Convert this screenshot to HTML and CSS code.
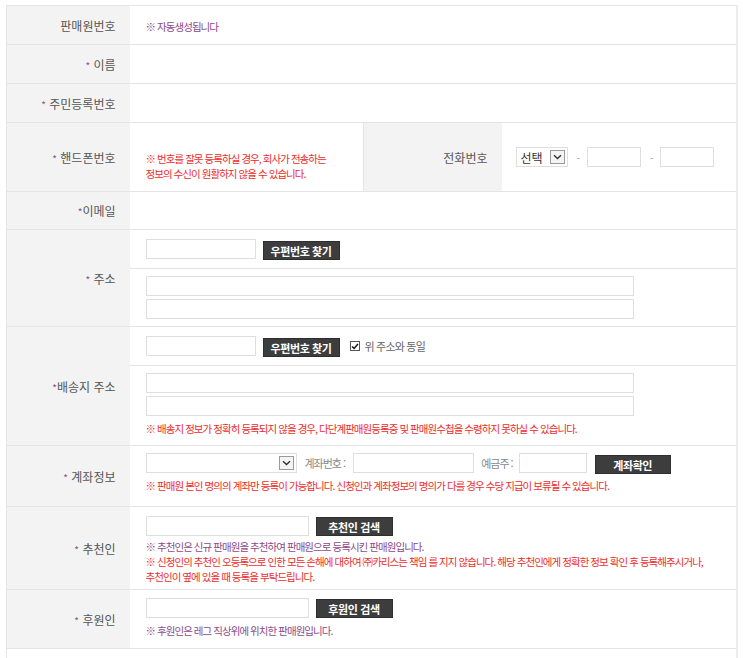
FILE: index.html
```html
<!DOCTYPE html>
<html lang="ko">
<head>
    <meta charset="UTF-8">
    <meta name="viewport" content="width=device-width, initial-scale=1.0">
    <title>판매원 등록</title>
    <link rel="stylesheet" href="styles.css">
</head>
<body>
    <div class="wrap">
        <table class="form-table">
            <colgroup>
                <col class="c-label">
                <col class="c-value">
                <col class="c-label2">
                <col class="c-value2">
            </colgroup>
            <tr class="row-sm">
                <th>판매원번호</th>
                <td colspan="3"><span class="note purple">※ 자동생성됩니다</span></td>
            </tr>
            <tr class="row-sm">
                <th><span class="req">*</span> 이름</th>
                <td colspan="3"></td>
            </tr>
            <tr class="row-sm">
                <th><span class="req">*</span> 주민등록번호</th>
                <td colspan="3"></td>
            </tr>
            <tr class="row-phone">
                <th><span class="req">*</span> 핸드폰번호</th>
                <td class="phone-note">
                    <p class="note red">※ 번호를 잘못 등록하실 경우, 회사가 전송하는<br>정보의 수신이 원활하지 않을 수 있습니다.</p>
                </td>
                <th>전화번호</th>
                <td>
                    <div class="line">
                        <span class="sel sel-tel">선택<span class="sel-arrow"><svg width="9" height="6" viewBox="0 0 9 6"><path d="M1 1.2 L4.5 4.6 L8 1.2" fill="none" stroke="#333" stroke-width="1.4"/></svg></span></span>
                        <span class="dash">-</span>
                        <input type="text" class="inp inp-tel">
                        <span class="dash">-</span>
                        <input type="text" class="inp inp-tel">
                    </div>
                </td>
            </tr>
            <tr class="row-email">
                <th><span class="req">*</span>이메일</th>
                <td colspan="3"></td>
            </tr>

            <tr class="row-sub">
                <th rowspan="2"><span class="req">*</span> 주소</th>
                <td colspan="3">
                    <div class="line">
                        <input type="text" class="inp inp-zip">
                        <button class="btn btn-zip">우편번호 찾기</button>
                    </div>
                </td>
            </tr>
            <tr>
                <td colspan="3" class="addr-cell">
                    <input type="text" class="inp inp-addr">
                    <input type="text" class="inp inp-addr">
                </td>
            </tr>

            <tr class="row-sub">
                <th rowspan="2"><span class="req">*</span>배송지 주소</th>
                <td colspan="3">
                    <div class="line">
                        <input type="text" class="inp inp-zip">
                        <button class="btn btn-zip">우편번호 찾기</button>
                        <label class="chk"><span class="chk-box"><svg width="9" height="9" viewBox="0 0 9 9"><path d="M1.2 4.4 L3.5 6.8 L7.8 1.6" fill="none" stroke="#111" stroke-width="1.6"/></svg></span>위 주소와 동일</label>
                    </div>
                </td>
            </tr>
            <tr>
                <td colspan="3" class="addr-cell ship-cell">
                    <input type="text" class="inp inp-addr">
                    <input type="text" class="inp inp-addr">
                    <p class="note red">※ 배송지 정보가 정확히 등록되지 않을 경우, 다단계판매원등록증 및 판매원수첩을 수령하지 못하실 수 있습니다.</p>
                </td>
            </tr>

            <tr class="row-bank">
                <th><span class="req">*</span> 계좌정보</th>
                <td colspan="3" class="bank-cell">
                    <div class="line">
                        <span class="sel sel-bank"><span class="sel-arrow"><svg width="9" height="6" viewBox="0 0 9 6"><path d="M1 1.2 L4.5 4.6 L8 1.2" fill="none" stroke="#333" stroke-width="1.4"/></svg></span></span>
                        <span class="field-lbl">계좌번호 :</span>
                        <input type="text" class="inp inp-acct">
                        <span class="field-lbl field-owner">예금주 :</span>
                        <input type="text" class="inp inp-owner">
                        <button class="btn btn-acct">계좌확인</button>
                    </div>
                    <p class="note red">※ 판매원 본인 명의의 계좌만 등록이 가능합니다. 신청인과 계좌정보의 명의가 다를 경우 수당 지급이 보류될 수 있습니다.</p>
                </td>
            </tr>

            <tr class="row-rec">
                <th><span class="req">*</span> 추천인</th>
                <td colspan="3" class="rec-cell">
                    <div class="line">
                        <input type="text" class="inp inp-rec">
                        <button class="btn btn-rec">추천인 검색</button>
                    </div>
                    <p class="note purple">※ 추천인은 신규 판매원을 추천하여 판매원으로 등록시킨 판매원입니다.</p>
                    <p class="note red">※ 신청인의 추천인 오등록으로 인한 모든 손해에 대하여 ㈜카리스는 책임 를 지지 않습니다. 해당 추천인에게 정확한 정보 확인 후 등록해주시거나,<br>추천인이 옆에 있을 때 등록을 부탁드립니다.</p>
                </td>
            </tr>

            <tr class="row-spon">
                <th><span class="req">*</span> 후원인</th>
                <td colspan="3" class="rec-cell spon-cell">
                    <div class="line">
                        <input type="text" class="inp inp-rec">
                        <button class="btn btn-rec">후원인 검색</button>
                    </div>
                    <p class="note purple">※ 후원인은 레그 직상위에 위치한 판매원입니다.</p>
                </td>
            </tr>

            <tr class="row-sm row-last">
                <th></th>
                <td colspan="3"></td>
            </tr>
        </table>
    </div>
</body>
</html>
```

FILE: styles.css
```css
body {
    margin: 0;
    background: #fff;
    font-family: "Noto Sans CJK KR", "Noto Sans", sans-serif;
    font-size: 12px;
    color: #555;
}
.wrap {
    padding: 5px 0 0 6px;
}
.form-table {
    width: 730px;
    table-layout: fixed;
    border-collapse: collapse;
    border-top: 1px solid #e6e6e6;
    border-left: 1px solid #e6e6e6;
    border-right: 2px solid #ececec;
}
.c-label { width: 123px; }
.c-value { width: 234px; }
.c-label2 { width: 138px; }
.c-value2 { width: 235px; }

.form-table th,
.form-table td {
    border-bottom: 1px solid #e4e4e4;
    padding: 0 16px;
    vertical-align: middle;
}
.form-table th {
    background: #f3f3f3;
    text-align: right;
    font-weight: normal;
    color: #555;
    padding-right: 14px;
    white-space: nowrap;
}
.form-table td.phone-note {
    border-right: 1px solid #e4e4e4;
}
.row-sm th, .row-sm td { height: 38px; }
.row-email th, .row-email td { height: 37px; }
.row-phone th, .row-phone td { height: 68px; }
.row-sub td { height: 38px; }

.req {
    color: #8b4f8b;
    font-size: 10px;
}

p { margin: 0; }

.note {
    font-size: 10.5px;
    letter-spacing: -0.95px;
    line-height: 15px;
    white-space: nowrap;
}
.red { color: #ee2b2b; }
.purple { color: #8b4a8b; }

.phone-note .note {
    padding-top: 18px;
}

.line {
    display: flex;
    align-items: center;
    height: 20px;
}

.inp {
    box-sizing: border-box;
    height: 20px;
    border: 1px solid #dedede;
    background: #fff;
    padding: 0 4px;
    margin: 0;
    font: inherit;
    outline: none;
}
.inp-tel { width: 54px; }
.inp-zip { width: 110px; }
.inp-addr {
    display: block;
    width: 488px;
}
.inp-acct { width: 121px; }
.inp-owner { width: 68px; }
.inp-rec { width: 163px; }

.dash {
    color: #999;
    font-size: 10px;
    margin: 0 7px 0 9px;
}

.sel {
    box-sizing: border-box;
    display: flex;
    align-items: center;
    justify-content: space-between;
    height: 20px;
    border: 1px solid #dedede;
    padding: 0 2px 0 4px;
    font-size: 12px;
    color: #333;
    background: #fff;
}
.sel-tel { width: 52px; margin-left: -2px; }
.sel-bank { width: 151px; justify-content: flex-end; }
.sel-arrow {
    box-sizing: border-box;
    display: flex;
    align-items: center;
    justify-content: center;
    width: 15px;
    height: 14px;
    border: 1px solid #9a9a9a;
    background: #f4f4f4;
}

.btn {
    box-sizing: border-box;
    height: 19px;
    border: 1px solid #2e2e2e;
    background: #3d3d3d;
    color: #fff;
    font: inherit;
    font-size: 11px;
    font-weight: bold;
    letter-spacing: -0.4px;
    padding: 0;
    margin-left: 7px;
    cursor: pointer;
}
.btn-zip { width: 77px; margin-top: 3px; }
.btn-acct { width: 76px; margin-left: 8px; margin-top: 3px; }
.btn-rec { width: 77px; margin-top: 1px; }

.chk {
    display: flex;
    align-items: center;
    margin-left: 10px;
    font-size: 11px;
    color: #666;
    letter-spacing: -0.8px;
}
.chk-box {
    box-sizing: border-box;
    display: flex;
    align-items: center;
    justify-content: center;
    width: 10px;
    height: 10px;
    border: 1px solid #555;
    margin-right: 5px;
    background: #fff;
}

.form-table td.addr-cell {
    padding-top: 7px;
    padding-bottom: 7px;
}
.addr-cell .inp-addr + .inp-addr {
    margin-top: 3px;
}
.form-table td.ship-cell {
    padding-bottom: 9px;
}
.ship-cell .note {
    margin-top: 5px;
}

.field-lbl {
    font-size: 11px;
    letter-spacing: -1px;
    color: #888;
    margin: 0 8px;
}
.field-owner {
    margin: 0 6px 0 7px;
}

.form-table td.bank-cell {
    padding-top: 7px;
    padding-bottom: 13px;
}
.bank-cell .note {
    margin-top: 5px;
}

.form-table td.rec-cell {
    padding-top: 9px;
    padding-bottom: 5px;
}
.rec-cell .line + .note {
    margin-top: 3px;
}
.form-table td.spon-cell {
    padding-top: 8px;
    padding-bottom: 10px;
}
.spon-cell .line + .note {
    margin-top: 5px;
}

.row-last th {
    background: #fff;
}
```
